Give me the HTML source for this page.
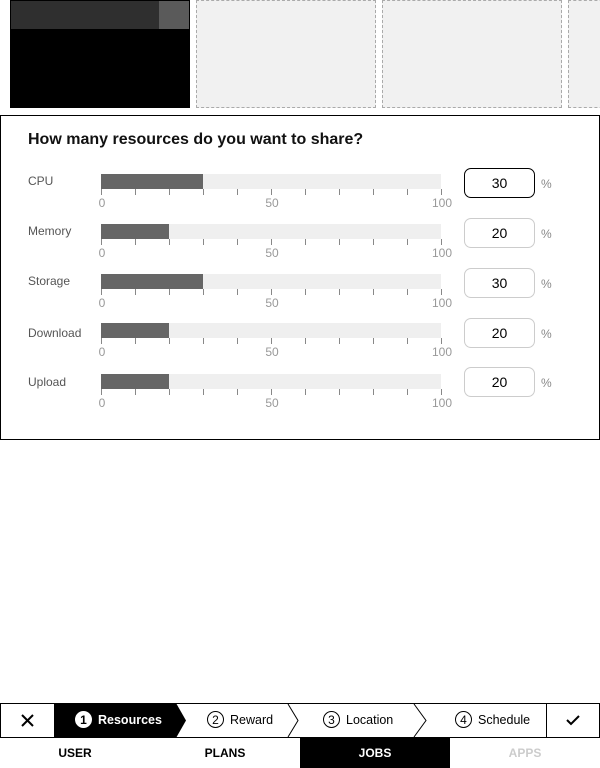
<!DOCTYPE html>
<html><head><meta charset="utf-8"><style>
*{box-sizing:border-box;margin:0;padding:0}
body{width:600px;height:768px;position:relative;background:#fff;font-family:"Liberation Sans",Arial,sans-serif;overflow:hidden}
.a{position:absolute}
.dash{position:absolute;top:0;height:108px;background:#f1f1f1;border:1px dashed #aaa}
.lbl{position:absolute;left:28px;font-size:12px;color:#555}
.bar{position:absolute;left:101px;width:340px;height:15px;background:#efefef}
.fill{position:absolute;left:0;top:0;height:15px;background:#666}
.ticks{position:absolute;left:101px;width:341px;height:6px;background:repeating-linear-gradient(to right,#888 0,#888 1px,transparent 1px,transparent 34px)}
.n{position:absolute;font-size:12px;color:#999;width:30px;text-align:center}
.inp{position:absolute;left:464px;width:71px;height:30px;border:1px solid #ccc;border-radius:7px;text-align:center;line-height:28px;font-size:14px;color:#000}
.pct{position:absolute;left:541px;font-size:12px;color:#888}
.step{position:absolute;top:703px;height:35px;font-size:12.5px;line-height:35px}
.c{display:inline-block;width:17px;height:17px;border:1px solid #000;border-radius:50%;text-align:center;line-height:16px;font-size:12px;margin-right:6px;vertical-align:middle;position:relative;top:-1px}
.tab{position:absolute;top:738px;height:30px;width:150px;text-align:center;line-height:30px;font-size:12px;font-weight:bold}
</style></head><body>
<div class="a" style="left:10px;top:0;width:180px;height:108px;background:#000"></div>
<div class="a" style="left:11px;top:1px;width:148px;height:28px;background:#2f2f2f"></div>
<div class="a" style="left:159px;top:1px;width:30px;height:28px;background:#5a5a5a"></div>
<div class="dash" style="left:196px;width:180px"></div>
<div class="dash" style="left:382px;width:180px"></div>
<div class="dash" style="left:568px;width:40px"></div>

<div class="a" style="left:0;top:115px;width:600px;height:325px;border:1px solid #000"></div>
<div class="a" style="left:28px;top:131px;font-size:16px;font-weight:bold;color:#111">How many resources do you want to share?</div>

<div class="lbl" style="top:174px">CPU</div>
<div class="bar" style="top:174px"><div class="fill" style="width:102px"></div></div>
<div class="ticks" style="top:189px"></div>
<div class="n" style="left:87px;top:196px">0</div><div class="n" style="left:257px;top:196px">50</div><div class="n" style="left:427px;top:196px">100</div>
<div class="inp" style="top:168px;border-color:#000">30</div><div class="pct" style="top:177px">%</div>

<div class="lbl" style="top:224px">Memory</div>
<div class="bar" style="top:224px"><div class="fill" style="width:68px"></div></div>
<div class="ticks" style="top:239px"></div>
<div class="n" style="left:87px;top:246px">0</div><div class="n" style="left:257px;top:246px">50</div><div class="n" style="left:427px;top:246px">100</div>
<div class="inp" style="top:218px">20</div><div class="pct" style="top:227px">%</div>

<div class="lbl" style="top:274px">Storage</div>
<div class="bar" style="top:274px"><div class="fill" style="width:102px"></div></div>
<div class="ticks" style="top:289px"></div>
<div class="n" style="left:87px;top:296px">0</div><div class="n" style="left:257px;top:296px">50</div><div class="n" style="left:427px;top:296px">100</div>
<div class="inp" style="top:268px">30</div><div class="pct" style="top:277px">%</div>

<div class="lbl" style="top:326px">Download</div>
<div class="bar" style="top:323px"><div class="fill" style="width:68px"></div></div>
<div class="ticks" style="top:338px"></div>
<div class="n" style="left:87px;top:345px">0</div><div class="n" style="left:257px;top:345px">50</div><div class="n" style="left:427px;top:345px">100</div>
<div class="inp" style="top:318px">20</div><div class="pct" style="top:327px">%</div>

<div class="lbl" style="top:375px">Upload</div>
<div class="bar" style="top:374px"><div class="fill" style="width:68px"></div></div>
<div class="ticks" style="top:389px"></div>
<div class="n" style="left:87px;top:396px">0</div><div class="n" style="left:257px;top:396px">50</div><div class="n" style="left:427px;top:396px">100</div>
<div class="inp" style="top:367px">20</div><div class="pct" style="top:376px">%</div>

<div class="a" style="left:0;top:703px;width:600px;height:35px;border:1px solid #000"></div>
<svg class="a" style="left:0;top:703px" width="600" height="35">
<polygon points="54,0 176,0 186,17.5 176,35 54,35" fill="#000"/>
<polyline points="288,1 298,17.5 288,34" fill="none" stroke="#000"/>
<polyline points="414,1 426,17.5 414,34" fill="none" stroke="#000"/>
<line x1="54.5" y1="0" x2="54.5" y2="35" stroke="#000"/>
<line x1="546.5" y1="0" x2="546.5" y2="35" stroke="#000"/>
<path d="M22 12 L33 23 M33 12 L22 23" stroke="#000" stroke-width="2"/>
<path d="M567 17 L571 21 L579 13" stroke="#000" stroke-width="2" fill="none"/>
</svg>
<div class="step" style="left:75px;color:#fff;font-weight:bold"><span class="c" style="background:#fff;color:#000;border-color:#fff">1</span>Resources</div>
<div class="step" style="left:207px"><span class="c">2</span>Reward</div>
<div class="step" style="left:323px"><span class="c">3</span>Location</div>
<div class="step" style="left:455px"><span class="c">4</span>Schedule</div>

<div class="tab" style="left:0">USER</div>
<div class="tab" style="left:150px">PLANS</div>
<div class="tab" style="left:300px;background:#000;color:#fff">JOBS</div>
<div class="tab" style="left:450px;color:#ccc">APPS</div>
</body></html>
